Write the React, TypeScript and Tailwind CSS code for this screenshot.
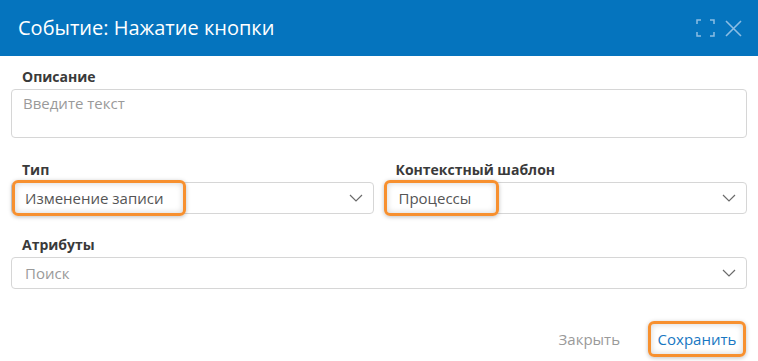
import React from "react";

function Chevron() {
  return (
    <svg width="14" height="8" viewBox="0 0 14 8" fill="none" className="shrink-0">
      <polyline points="1,1 7,7 13,1" stroke="#6b6b6b" strokeWidth="1.2" />
    </svg>
  );
}

function Label({ children }: { children: React.ReactNode }) {
  return <div className="pl-[11px] text-[14px] font-bold leading-[18px] text-[#3a3a3a]">{children}</div>;
}

function Highlight({ className }: { className: string }) {
  return (
    <span
      className={`pointer-events-none absolute rounded-[6px] border-[3px] border-[#F7902F] shadow-[inset_0_0_6px_rgba(0,0,0,0.18),0_1px_4px_rgba(0,0,0,0.25)] ${className}`}
    />
  );
}

function Select({ value, placeholder, highlight }: { value?: string; placeholder?: string; highlight?: string }) {
  return (
    <div className="relative flex h-[32px] items-center justify-between rounded-[4px] border border-[#d6d6d6] bg-white pl-[13px] pr-[10px]">
      <span className={`text-[15px] ${value ? "text-[#555]" : "text-[#9a9a9a]"}`}>{value ?? placeholder}</span>
      <Chevron />
      {highlight && <Highlight className={highlight} />}
    </div>
  );
}

export default function App() {
  return (
    <div className="h-[361px] w-[758px] overflow-hidden bg-white" style={{ fontFamily: '"Open Sans", sans-serif' }}>
      <header className="flex h-[56px] items-center justify-between bg-[#0574BE] pl-[18px] pr-[16px]">
        <h1 className="text-[20px] text-white">Событие: Нажатие кнопки</h1>
        <div className="flex items-center gap-[10px] text-[#8cbde4]">
          <svg width="19" height="18" viewBox="0 0 19 18" fill="none" stroke="currentColor" strokeWidth="1.5">
            <path d="M1 5V1h4M14 1h4v4M18 13v4h-4M5 17H1v-4" />
          </svg>
          <svg width="17" height="17" viewBox="0 0 17 17" fill="none" stroke="currentColor" strokeWidth="1.6">
            <path d="M1 1l15 15M16 1L1 16" />
          </svg>
        </div>
      </header>

      <main className="px-[11px] pt-[12px]">
        <Label>Описание</Label>
        <div className="mt-[3px] h-[49px] rounded-[4px] border border-[#d6d6d6] px-[11px] pt-[2px] text-[15px] text-[#9a9a9a]">
          Введите текст
        </div>

        <div className="mt-[23px] grid grid-cols-2 gap-[11px]">
          <div>
            <Label>Тип</Label>
            <div className="mt-[3px]">
              <Select value="Изменение записи" highlight="left-[0px] top-[-3px] h-[36px] w-[174px]" />
            </div>
          </div>
          <div>
            <Label>Контекстный шаблон</Label>
            <div className="mt-[3px]">
              <Select value="Процессы" highlight="left-[-2px] top-[-3px] h-[36px] w-[115px]" />
            </div>
          </div>
        </div>

        <div className="mt-[22px]">
          <Label>Атрибуты</Label>
          <div className="mt-[3px]">
            <Select placeholder="Поиск" />
          </div>
        </div>

        <footer className="mt-[32px] flex items-center justify-end gap-[28px] pr-[1px]">
          <button className="text-[15px] text-[#9a9a9a]">Закрыть</button>
          <button className="relative h-[36px] w-[98px] text-[15px] text-[#1877C2]">
            Сохранить
            <Highlight className="inset-0" />
          </button>
        </footer>
      </main>
    </div>
  );
}
